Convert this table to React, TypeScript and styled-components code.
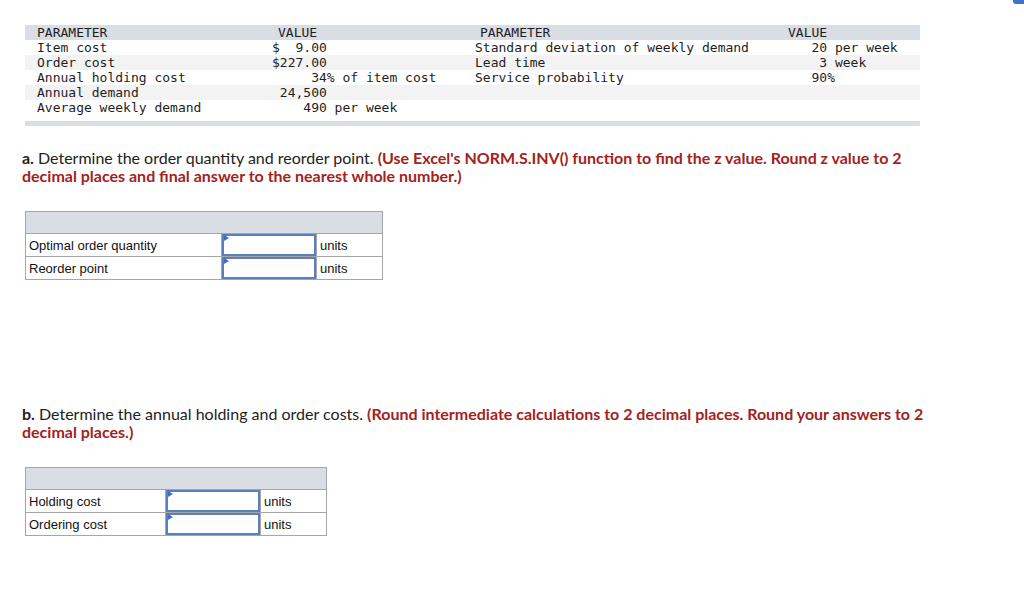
import React from 'react'
import styled, { createGlobalStyle } from 'styled-components'

const GlobalStyle = createGlobalStyle`
  body {
    margin: 0;
    background: #fff;
    font-family: "Liberation Sans", Arial, sans-serif;
  }
`

const Page = styled.div`
  position: relative;
  width: 1024px;
  min-height: 602px;
  padding: 25px 0 0 0;
  box-sizing: border-box;
`

const CornerTab = styled.div`
  position: absolute;
  top: 0;
  right: 0;
  width: 11px;
  height: 4px;
  background: #3f72c4;
  border-bottom-left-radius: 3px;
`

const DataTable = styled.div`
  width: 895px;
  margin-left: 25px;
  font-family: "DejaVu Sans Mono", "Liberation Mono", monospace;
  font-size: 13px;
  line-height: 15px;
  color: #1e1e1e;
`

const DataRow = styled.div<{ $tone?: 'head' | 'stripe' | 'plain' }>`
  display: grid;
  grid-template-columns: 247px 203px 313px 132px;
  height: 15px;
  background: ${p =>
    p.$tone === 'head' ? '#d9dde4' : p.$tone === 'stripe' ? '#f3f3f3' : '#fff'};
`

const DataCell = styled.div<{ $pad?: number }>`
  padding-left: ${p => p.$pad ?? 0}px;
  white-space: pre;
`

const Spacer = styled.div`
  height: 6px;
`

const EndBar = styled.div`
  height: 5px;
  background: #d9dde4;
`

const Prompt = styled.p`
  margin: 23px 0 0 22px;
  font-family: Lato, "Open Sans", sans-serif;
  font-size: 16px;
  line-height: 18px;
  color: #222;
`

const Lead = styled.b`
  font-weight: 700;
`

const Note = styled.span`
  color: #a4221d;
  font-weight: 700;
`

const AnswerTable = styled.table<{ $label: number }>`
  border-collapse: collapse;
  margin: 26px 0 0 25px;
  font-family: "Liberation Sans", Arial, sans-serif;
  font-size: 13px;
  color: #111;
  td {
    border: 1px solid #a6a6a6;
    height: 22px;
    padding: 0 0 0 3px;
    box-sizing: border-box;
  }
  td:first-child {
    width: ${p => p.$label}px;
  }
`

const HeadCell = styled.td`
  background: #d9dde4;
`

const InputCell = styled.td`
  && {
    width: 95px;
    padding: 0;
    position: relative;
  }
`

const InputBox = styled.div`
  position: relative;
  height: 22px;
  border: 2px solid #5b7fbd;
  box-sizing: border-box;
  &::before {
    content: '';
    position: absolute;
    top: -1px;
    left: 0;
    border-top: 3px solid transparent;
    border-bottom: 3px solid transparent;
    border-left: 5px solid #3f6fc0;
  }
`

const UnitCell = styled.td`
  && {
    width: 66px;
  }
`

const Gap = styled.div<{ $h: number }>`
  height: ${p => p.$h}px;
`

const leftRows: [string, string, string, string][] = [
  ['Item cost', '$  9.00', 'Standard deviation of weekly demand', '   20 per week'],
  ['Order cost', '$227.00', 'Lead time', '    3 week'],
  ['Annual holding cost', '     34% of item cost', 'Service probability', '   90%'],
  ['Annual demand', ' 24,500', '', ''],
  ['Average weekly demand', '    490 per week', '', ''],
]

const Answers = ({ label, rows }: { label: number; rows: string[] }) => (
  <AnswerTable $label={label}>
    <tbody>
      <tr>
        <HeadCell colSpan={3} />
      </tr>
      {rows.map(r => (
        <tr key={r}>
          <td>{r}</td>
          <InputCell>
            <InputBox />
          </InputCell>
          <UnitCell>units</UnitCell>
        </tr>
      ))}
    </tbody>
  </AnswerTable>
)

export default function App() {
  return (
    <>
      <GlobalStyle />
      <Page>
        <CornerTab />
        <DataTable>
          <DataRow $tone="head">
            <DataCell $pad={12}>PARAMETER</DataCell>
            <DataCell $pad={6}>VALUE</DataCell>
            <DataCell $pad={5}>PARAMETER</DataCell>
            <DataCell>VALUE</DataCell>
          </DataRow>
          {leftRows.map((r, i) => (
            <DataRow key={i} $tone={i % 2 ? 'stripe' : 'plain'}>
              <DataCell $pad={12}>{r[0]}</DataCell>
              <DataCell>{r[1]}</DataCell>
              <DataCell>{r[2]}</DataCell>
              <DataCell>{r[3]}</DataCell>
            </DataRow>
          ))}
          <Spacer />
          <EndBar />
        </DataTable>

        <Prompt>
          <Lead>a.</Lead> Determine the order quantity and reorder point.{' '}
          <Note>
            (Use Excel's NORM.S.INV() function to find the z value. Round z value to 2
            <br />
            decimal places and final answer to the nearest whole number.)
          </Note>
        </Prompt>
        <Answers label={196} rows={['Optimal order quantity', 'Reorder point']} />

        <Gap $h={102} />
        <Prompt>
          <Lead>b.</Lead> Determine the annual holding and order costs.{' '}
          <Note>
            (Round intermediate calculations to 2 decimal places. Round your answers to 2
            <br />
            decimal places.)
          </Note>
        </Prompt>
        <Answers label={140} rows={['Holding cost', 'Ordering cost']} />
      </Page>
    </>
  )
}
